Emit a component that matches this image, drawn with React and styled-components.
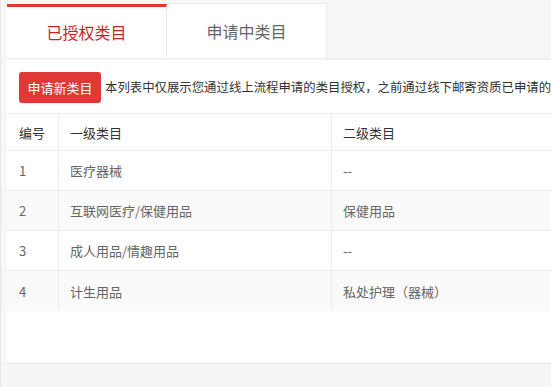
import React from "react";
import styled, { createGlobalStyle } from "styled-components";

const Global = createGlobalStyle`
  html, body { margin: 0; padding: 0; }
  body {
    background: #f4f4f4;
    font-family: "Noto Sans CJK SC", "Noto Sans", sans-serif;
    overflow: hidden;
  }
`;

const Page = styled.div`
  width: 551px;
  height: 387px;
  padding: 3px 0 0 6px;
  box-sizing: border-box;
  display: flex;
  flex-direction: column;
  border-left: 1px solid #e6e6e6;
  background: #f7f7f7;
  overflow: hidden;
`;

const TabBar = styled.div`
  display: flex;
  height: 56px;
  flex-shrink: 0;
  border-bottom: 1px solid #ececec;
  box-sizing: border-box;
`;

const Tab = styled.div`
  width: 160px;
  box-sizing: border-box;
  background: #fff;
  display: flex;
  align-items: center;
  justify-content: center;
  font-size: 16px;
  color: ${(p) => (p.$active ? "#c4262b" : "#666")};
  border-top: ${(p) => (p.$active ? "3px solid #e03838" : "1px solid #ececec")};
  margin-top: ${(p) => (p.$active ? "1px" : "0")};
  border-right: 1px solid #ececec;
  padding-bottom: ${(p) => (p.$active ? "2px" : "0")};
`;

const Panel = styled.div`
  flex: 1;
  background: #fff;
  display: flex;
  flex-direction: column;
  margin-top: 1px;
`;

const Toolbar = styled.div`
  display: flex;
  align-items: center;
  gap: 4px;
  height: 53px;
  padding: 0 0 0 12px;
  flex-shrink: 0;
  white-space: nowrap;
  overflow: hidden;
`;

const Button = styled.button`
  flex-shrink: 0;
  width: 82px;
  height: 31px;
  border: none;
  border-radius: 3px;
  background: #e03737;
  color: #fff;
  font-family: inherit;
  font-size: 13px;
  padding: 0;
  margin-top: 1px;
`;

const Note = styled.span`
  font-size: 12.4px;
  color: #333;
  overflow: hidden;
  text-overflow: clip;
`;

const Table = styled.div`
  display: flex;
  flex-direction: column;
  border-top: 1px solid #ececec;
`;

const Row = styled.div`
  display: grid;
  grid-template-columns: 51px 273px 1fr;
  height: ${(p) => (p.$head ? "37px" : "40px")};
  border-bottom: ${(p) => (p.$last ? "none" : "1px solid #ececec")};
  box-sizing: border-box;
  background: ${(p) => (p.$stripe ? "#fafafa" : "#fff")};
  color: ${(p) => (p.$head ? "#333" : "#666")};
  font-size: 13px;
`;

const Cell = styled.div`
  display: flex;
  align-items: center;
  padding-left: ${(p) => (p.$first ? "12px" : "11px")};
  border-left: ${(p) => (p.$first ? "none" : "1px solid #ececec")};
  white-space: nowrap;
  overflow: hidden;
`;

const Spacer = styled.div`
  flex: 1;
  max-height: 52px;
  min-height: 52px;
  border-bottom: 1px solid #e8e8e8;
`;

const Footer = styled.div`
  flex: 1;
  background: #f5f5f5;
`;

const rows = [
  ["1", "医疗器械", "--"],
  ["2", "互联网医疗/保健用品", "保健用品"],
  ["3", "成人用品/情趣用品", "--"],
  ["4", "计生用品", "私处护理（器械）"],
];

export default function App() {
  return (
    <>
      <Global />
      <Page>
        <TabBar>
          <Tab $active>已授权类目</Tab>
          <Tab>申请中类目</Tab>
        </TabBar>
        <Panel>
          <Toolbar>
            <Button>申请新类目</Button>
            <Note>
              本列表中仅展示您通过线上流程申请的类目授权，之前通过线下邮寄资质已申请的类目授权不在此列表中展示
            </Note>
          </Toolbar>
          <Table>
            <Row $head>
              <Cell $first>编号</Cell>
              <Cell>一级类目</Cell>
              <Cell>二级类目</Cell>
            </Row>
            {rows.map((r, i) => (
              <Row key={r[0]} $stripe={i % 2 === 1} $last={i === rows.length - 1}>
                <Cell $first>{r[0]}</Cell>
                <Cell>{r[1]}</Cell>
                <Cell>{r[2]}</Cell>
              </Row>
            ))}
          </Table>
          <Spacer />
          <Footer />
        </Panel>
      </Page>
    </>
  );
}
